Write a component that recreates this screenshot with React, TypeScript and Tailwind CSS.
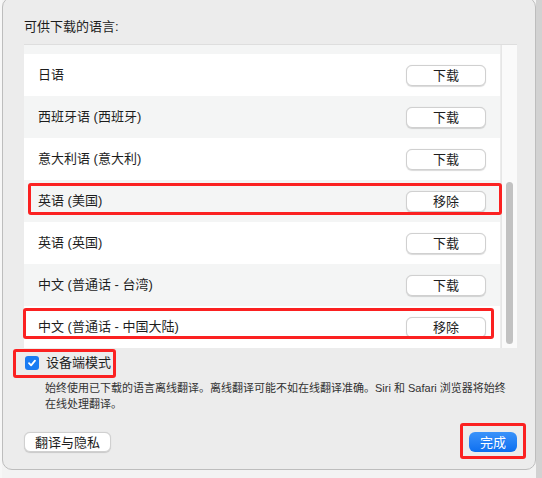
import React from 'react';

const font = { fontFamily: '"Liberation Sans", "Noto Sans CJK SC", sans-serif' };

type Lang = { name: string; action: '下载' | '移除' };

const languages: Lang[] = [
  { name: '日语', action: '下载' },
  { name: '西班牙语 (西班牙)', action: '下载' },
  { name: '意大利语 (意大利)', action: '下载' },
  { name: '英语 (美国)', action: '移除' },
  { name: '英语 (英国)', action: '下载' },
  { name: '中文 (普通话 - 台湾)', action: '下载' },
  { name: '中文 (普通话 - 中国大陆)', action: '移除' },
];

// 행 버튼 (macOS 스타일)
const RowButton = ({ label }: { label: string }) => (
  <button className="w-[80px] h-[21px] rounded-[6px] bg-white border border-[#d0d0d0] shadow-[0_0.5px_1px_rgba(0,0,0,0.15)] text-[13px] text-[#1d1d1d] leading-none flex items-center justify-center">
    {label}
  </button>
);

export default function App() {
  return (
    <div className="relative w-[542px] h-[478px] overflow-hidden bg-[#f3f3f3] flex" style={font}>
      <div className="w-[2px] shrink-0 bg-[#f7f7f7]" />

      {/* 다이얼로그 */}
      <div className="w-[534px] h-[473px] -mt-[3px] shrink-0 bg-[#ececec] rounded-[10px] border border-[#bdbdbd] flex flex-col pl-[21px] pr-[18px]">
        <div className="h-[46px] pt-[20px] text-[13px] leading-[18px] text-[#1d1d1d]">可供下载的语言:</div>

        {/* 언어 목록 */}
        <div className="h-[304px] flex border-t border-[#dedede]">
          <div className="flex-1 flex flex-col pr-[1px]">
            <div className="h-[9px] bg-[#f4f5f5]" />
            {languages.map((lang, i) => (
              <div
                key={lang.name}
                className={`h-[42px] flex items-center justify-between pl-[14px] pr-[14px] ${i % 2 === 0 ? 'bg-white' : 'bg-[#f4f5f5]'}`}
              >
                <span className="text-[13px] text-[#1d1d1d]">{lang.name}</span>
                <RowButton label={lang.action} />
              </div>
            ))}
          </div>
          {/* 스크롤바 */}
          <div className="w-[16px] bg-[#fafafa] border-l border-[#e6e6e6] flex flex-col pt-[137px] pb-[4px] items-center">
            <div className="w-[7px] flex-1 rounded-full bg-[#c2c2c2]" />
          </div>
        </div>

        {/* 기기 모드 */}
        <div className="mt-[7px] flex items-center gap-[7px] h-[16px] pl-[1px]">
          <div className="w-[14px] h-[14px] rounded-[3px] bg-[#1a7cf2] flex items-center justify-center">
            <svg width="10" height="10" viewBox="0 0 10 10">
              <path d="M2 5.2 L4.1 7.4 L8 2.6" fill="none" stroke="white" strokeWidth="1.8" strokeLinecap="round" strokeLinejoin="round" />
            </svg>
          </div>
          <span className="text-[13px] text-[#1d1d1d]">设备端模式</span>
        </div>
        <p className="mt-[9px] pl-[21px] pr-[4px] text-[11px] leading-[16px] text-[#333]">
          始终使用已下载的语言离线翻译。离线翻译可能不如在线翻译准确。Siri 和 Safari 浏览器将始终在线处理翻译。
        </p>

        {/* 하단 버튼 */}
        <div className="mt-[20px] flex justify-between items-center">
          <button className="w-[87px] h-[20px] rounded-[6px] bg-white border border-[#d0d0d0] shadow-[0_0.5px_1px_rgba(0,0,0,0.15)] text-[13px] text-[#1d1d1d] leading-none">
            翻译与隐私
          </button>
          <button className="w-[48px] h-[20px] rounded-[6px] bg-gradient-to-b from-[#3a93fa] to-[#0a6ff0] text-[13px] text-white leading-none">
            完成
          </button>
        </div>
      </div>

      <div className="flex-1 bg-[#d2d2d2]" />

      {/* 빨간 강조 표시 */}
      <div className="absolute left-[28px] top-[183px] w-[474px] h-[32px] border-[3px] border-[#fb2121] rounded-[3px]" />
      <div className="absolute left-[23px] top-[308px] w-[471px] h-[31px] border-[3px] border-[#fb2121] rounded-[3px]" />
      <div className="absolute left-[13px] top-[349px] w-[103px] h-[29px] border-[3px] border-[#fb2121] rounded-[3px]" />
      <div className="absolute left-[460px] top-[423px] w-[66px] h-[36px] border-[3px] border-[#fb2121] rounded-[3px]" />
    </div>
  );
}
